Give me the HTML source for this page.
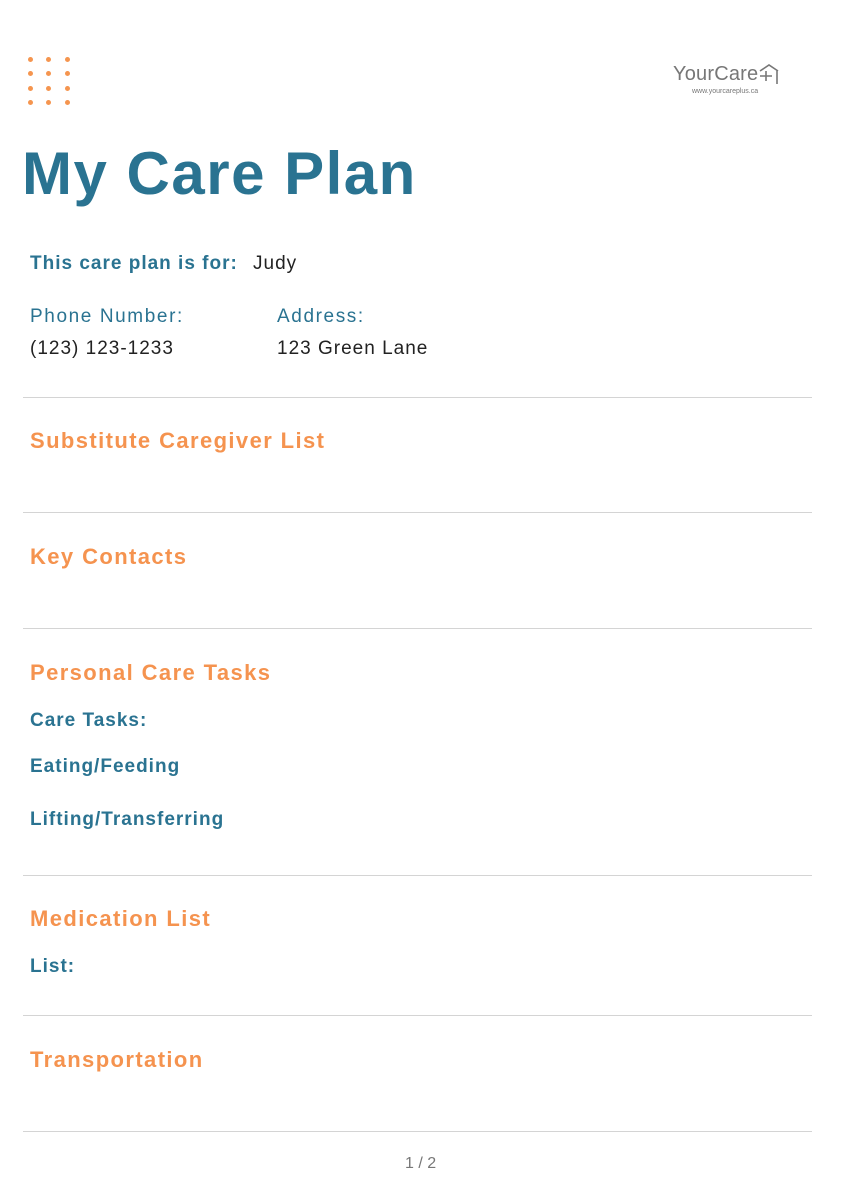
<!DOCTYPE html>
<html><head><meta charset="utf-8"><style>
*{margin:0;padding:0;box-sizing:border-box}
body{width:844px;height:1194px;background:#fff;font-family:"Liberation Sans",sans-serif;position:relative;overflow:hidden}
.a{position:absolute;white-space:nowrap}
.dot{position:absolute;width:5px;height:5px;border-radius:50%;background:#f5954f}
.b{color:#2a7391;font-weight:bold;font-size:19px;letter-spacing:1px}
.o{color:#f5934f;font-weight:bold;font-size:22px;letter-spacing:1.4px}
.hr{position:absolute;left:23px;width:789px;height:1px;background:#d4d4d4}
.t{color:#222;font-size:19px;letter-spacing:1px}
.l{color:#2a7391;font-size:19px;letter-spacing:1.6px}
</style></head><body>
<div class="dot" style="left:28px;top:57px"></div><div class="dot" style="left:46px;top:57px"></div><div class="dot" style="left:65px;top:57px"></div>
<div class="dot" style="left:28px;top:71px"></div><div class="dot" style="left:46px;top:71px"></div><div class="dot" style="left:65px;top:71px"></div>
<div class="dot" style="left:28px;top:86px"></div><div class="dot" style="left:46px;top:86px"></div><div class="dot" style="left:65px;top:86px"></div>
<div class="dot" style="left:28px;top:100px"></div><div class="dot" style="left:46px;top:100px"></div><div class="dot" style="left:65px;top:100px"></div>
<div class="a" style="left:673px;top:63px;font-size:20px;color:#777;letter-spacing:0.2px">YourCare</div>
<svg class="a" style="left:758px;top:63px" width="24" height="22" viewBox="0 0 24 22" fill="none" stroke="#777" stroke-width="1.6"><path d="M2 8 L11 2 L20 8 M19 7 V21 M2 13 H14 M8 8 V18"/></svg>
<div class="a" style="left:692px;top:88px;font-size:7px;color:#777">www.yourcareplus.ca</div>
<div class="a" style="left:22px;top:139px;font-size:60px;font-weight:bold;color:#2a7391;letter-spacing:1.5px">My Care Plan</div>
<div class="a b" style="left:30px;top:253px">This care plan is for:</div>
<div class="a t" style="left:253px;top:253px">Judy</div>
<div class="a l" style="left:30px;top:306px">Phone Number:</div>
<div class="a l" style="left:277px;top:306px">Address:</div>
<div class="a t" style="left:30px;top:338px">(123) 123-1233</div>
<div class="a t" style="left:277px;top:338px">123 Green Lane</div>
<div class="hr" style="top:397px"></div>
<div class="a o" style="left:30px;top:428px">Substitute Caregiver List</div>
<div class="hr" style="top:512px"></div>
<div class="a o" style="left:30px;top:544px">Key Contacts</div>
<div class="hr" style="top:628px"></div>
<div class="a o" style="left:30px;top:660px">Personal Care Tasks</div>
<div class="a b" style="left:30px;top:710px">Care Tasks:</div>
<div class="a b" style="left:30px;top:756px">Eating/Feeding</div>
<div class="a b" style="left:30px;top:809px">Lifting/Transferring</div>
<div class="hr" style="top:875px"></div>
<div class="a o" style="left:30px;top:906px">Medication List</div>
<div class="a b" style="left:30px;top:956px">List:</div>
<div class="hr" style="top:1015px"></div>
<div class="a o" style="left:30px;top:1047px">Transportation</div>
<div class="hr" style="top:1131px"></div>
<div class="a" style="left:405px;top:1155px;font-size:16px;color:#777">1 / 2</div>
</body></html>
